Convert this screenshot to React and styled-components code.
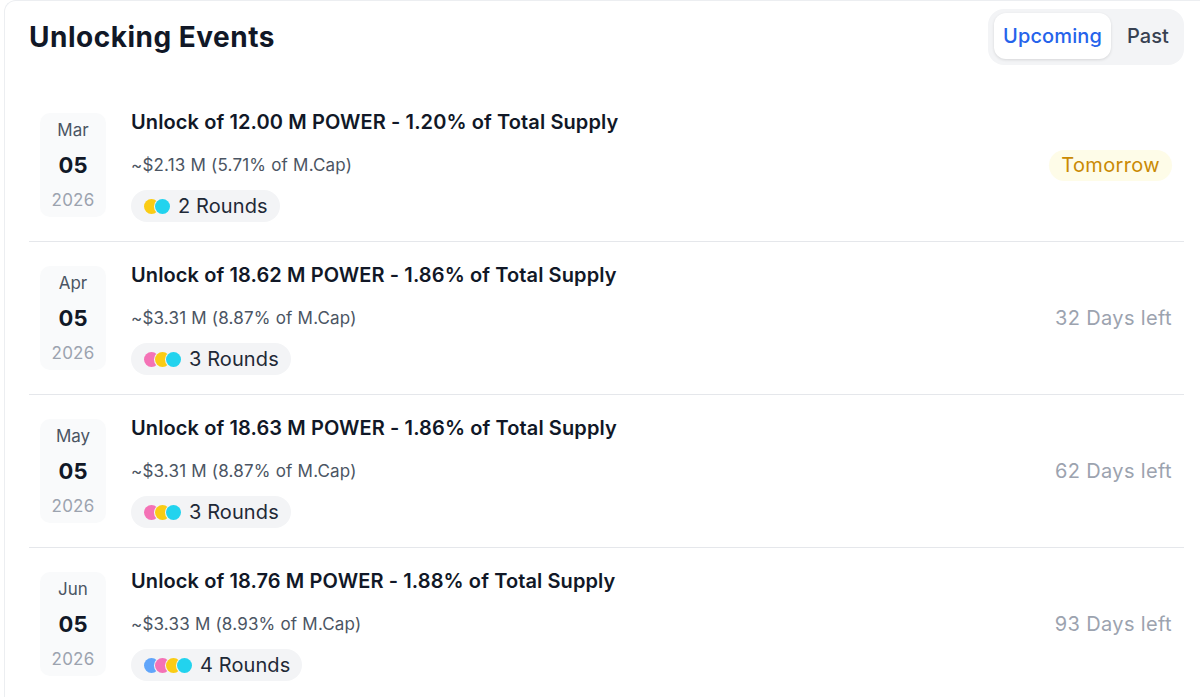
import React from 'react';
import styled, { createGlobalStyle } from 'styled-components';

const GlobalStyle = createGlobalStyle`
  html, body {
    margin: 0;
    padding: 0;
    background: #ffffff;
    overflow: hidden;
  }
  body {
    font-family: Inter, "Noto Sans", "Liberation Sans", sans-serif;
    -webkit-font-smoothing: antialiased;
  }
`;

const Page = styled.div`
  padding-left: 4px;
  width: 1220px;
`;

const Card = styled.section`
  width: 1155px;
  padding: 8px 24px 0 24px;
  border: 1px solid #eceef1;
  border-bottom: none;
  border-right: none;
  border-radius: 12px 0 0 0;
  background: #fff;
`;

const Header = styled.div`
  display: flex;
  align-items: center;
  justify-content: space-between;
  height: 56px;
  margin-bottom: 24px;
`;

const Title = styled.h2`
  margin: 0;
  font-size: 28px;
  font-weight: 700;
  color: #111827;
  letter-spacing: 0.5px;
`;

const Tabs = styled.div`
  display: flex;
  padding: 4px 3px 6px 6px;
  gap: 4px;
  background: #f3f4f6;
  border-radius: 16px;
`;

const Tab = styled.button`
  border: none;
  height: 46px;
  padding: 0 ${p => (p.active ? '9px' : '12px')};
  border-radius: 12px;
  font-family: inherit;
  font-size: 20px;
  font-weight: 500;
  letter-spacing: 0.1px;
  cursor: pointer;
  background: ${p => (p.active ? '#ffffff' : 'transparent')};
  color: ${p => (p.active ? '#2563eb' : '#374151')};
  box-shadow: ${p => (p.active ? '0 1px 3px rgba(0,0,0,0.12)' : 'none')};
`;

const Row = styled.div`
  display: flex;
  align-items: center;
  padding: 19px 0 19px 11px;
  border-bottom: ${p => (p.last ? 'none' : '1px solid #e5e7eb')};
`;

const DateBox = styled.div`
  width: 66px;
  height: 104px;
  flex-shrink: 0;
  display: flex;
  flex-direction: column;
  align-items: center;
  justify-content: space-between;
  padding: 7px 0;
  box-sizing: border-box;
  background: #f9fafb;
  border-radius: 10px;
`;

const Month = styled.span`
  font-size: 17px;
  color: #4b5563;
  line-height: 20px;
`;

const Day = styled.span`
  font-size: 22px;
  font-weight: 700;
  color: #111827;
  line-height: 26px;
`;

const Year = styled.span`
  font-size: 17px;
  color: #9ca3af;
  line-height: 20px;
  letter-spacing: 0.2px;
`;

const Info = styled.div`
  flex: 1;
  display: flex;
  flex-direction: column;
  align-items: flex-start;
  margin-left: 25px;
`;

const EventTitle = styled.div`
  font-size: 20px;
  font-weight: 600;
  color: #111827;
  line-height: 28px;
  letter-spacing: 0.1px;
`;

const Value = styled.div`
  margin-top: 17px;
  font-size: 17px;
  color: #4b5563;
  line-height: 24px;
  letter-spacing: 0.2px;
`;

const RoundsPill = styled.div`
  margin-top: 13px;
  display: flex;
  align-items: center;
  gap: 8px;
  height: 32px;
  padding: 0 12px 0 13px;
  background: #f3f4f6;
  border-radius: 16px;
`;

const Dots = styled.div`
  display: flex;
`;

const Dot = styled.span`
  width: 15px;
  height: 15px;
  border-radius: 50%;
  background: ${p => p.color};
  box-shadow: 0 0 0 1px #f3f4f6;
  margin-left: ${p => (p.first ? '0' : '-4px')};
`;

const RoundsText = styled.span`
  font-size: 20px;
  color: #1f2937;
  letter-spacing: 0.1px;
`;

const Status = styled.div`
  margin-right: 12px;
  font-size: 20px;
  line-height: 31px;
  letter-spacing: 0.35px;
  padding: 0 ${p => (p.soon ? '12px' : '0')};
  border-radius: 16px;
  color: ${p => (p.soon ? '#ca8a04' : '#9ca3af')};
  background: ${p => (p.soon ? '#fefce8' : 'transparent')};
`;

const events = [
  {
    month: 'Mar', day: '05', year: '2026',
    title: 'Unlock of 12.00 M POWER - 1.20% of Total Supply',
    value: '~$2.13 M (5.71% of M.Cap)',
    dots: ['#facc15', '#22d3ee'], rounds: '2 Rounds',
    status: 'Tomorrow', soon: true,
  },
  {
    month: 'Apr', day: '05', year: '2026',
    title: 'Unlock of 18.62 M POWER - 1.86% of Total Supply',
    value: '~$3.31 M (8.87% of M.Cap)',
    dots: ['#f472b6', '#facc15', '#22d3ee'], rounds: '3 Rounds',
    status: '32 Days left',
  },
  {
    month: 'May', day: '05', year: '2026',
    title: 'Unlock of 18.63 M POWER - 1.86% of Total Supply',
    value: '~$3.31 M (8.87% of M.Cap)',
    dots: ['#f472b6', '#facc15', '#22d3ee'], rounds: '3 Rounds',
    status: '62 Days left',
  },
  {
    month: 'Jun', day: '05', year: '2026',
    title: 'Unlock of 18.76 M POWER - 1.88% of Total Supply',
    value: '~$3.33 M (8.93% of M.Cap)',
    dots: ['#60a5fa', '#f472b6', '#facc15', '#22d3ee'], rounds: '4 Rounds',
    status: '93 Days left',
  },
];

export default function App() {
  return (
    <Page>
      <GlobalStyle />
      <Card>
        <Header>
          <Title>Unlocking Events</Title>
          <Tabs>
            <Tab active>Upcoming</Tab>
            <Tab>Past</Tab>
          </Tabs>
        </Header>
        {events.map((ev, i) => (
          <Row key={ev.month} last={i === events.length - 1}>
            <DateBox>
              <Month>{ev.month}</Month>
              <Day>{ev.day}</Day>
              <Year>{ev.year}</Year>
            </DateBox>
            <Info>
              <EventTitle>{ev.title}</EventTitle>
              <Value>{ev.value}</Value>
              <RoundsPill>
                <Dots>
                  {ev.dots.map((c, j) => (
                    <Dot key={j} color={c} first={j === 0} />
                  ))}
                </Dots>
                <RoundsText>{ev.rounds}</RoundsText>
              </RoundsPill>
            </Info>
            <Status soon={ev.soon}>{ev.status}</Status>
          </Row>
        ))}
      </Card>
    </Page>
  );
}
